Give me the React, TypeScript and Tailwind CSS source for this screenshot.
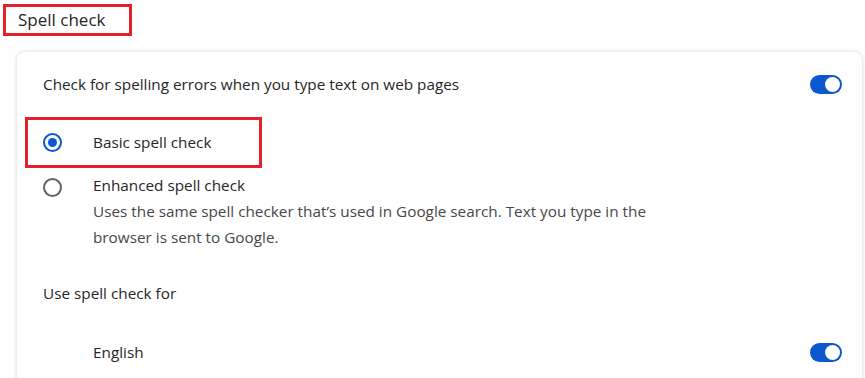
import React from "react";

function Toggle() {
  return (
    <div className="relative h-[19px] w-[32px] rounded-full bg-[#0b57d0]">
      <div className="absolute right-[2px] top-[2px] h-[15px] w-[15px] rounded-full bg-white" />
    </div>
  );
}

function Radio({ checked }: { checked: boolean }) {
  return checked ? (
    <div className="flex h-[19px] w-[19px] items-center justify-center rounded-full border-[2px] border-[#0b57d0]">
      <div className="h-[9px] w-[9px] rounded-full bg-[#0b57d0]" />
    </div>
  ) : (
    <div className="h-[19px] w-[19px] rounded-full border-[2px] border-[#5f6368]" />
  );
}

export default function App() {
  return (
    <div
      className="h-[378px] w-[865px] overflow-hidden bg-white text-[15.3px] text-[#262626]"
      style={{ fontFamily: '"Open Sans", "Noto Sans", sans-serif' }}
    >
      <div className="pl-[3px] pt-[4px]">
        <div className="flex h-[32px] w-[129px] items-center border-[3px] border-[#e3202b] pl-[12px] text-[17px]">
          Spell check
        </div>
      </div>
      <div className="ml-[17px] mr-[3px] mt-[16px] h-[400px] rounded-[8px] bg-white shadow-[0_0_4px_rgba(0,0,0,0.18)]">
        <div className="flex h-[62px] items-center justify-between pl-[26px] pr-[20px] pt-[2px]">
          <span>Check for spelling errors when you type text on web pages</span>
          <Toggle />
        </div>
        <div className="pl-[8px] pt-[3px]">
          <div className="flex h-[51px] w-[237px] items-center border-[3px] border-[#e3202b] pl-[15px]">
            <Radio checked />
            <span className="ml-[31px]">Basic spell check</span>
          </div>
        </div>
        <div className="flex pl-[26px] pt-[9px]">
          <div className="pt-[1px]">
            <Radio checked={false} />
          </div>
          <div className="ml-[31px] leading-[26px]">
            <div className="-mt-[5px]">Enhanced spell check</div>
            <div className="text-[#474747]">
              Uses the same spell checker that’s used in Google search. Text you type in the
              <br />
              browser is sent to Google.
            </div>
          </div>
        </div>
        <div className="flex h-[62px] items-center pl-[26px] pt-[24px]">
          Use spell check for
        </div>
        <div className="flex h-[70px] items-center justify-between pl-[76px] pr-[20px] pt-[10px]">
          <span>English</span>
          <Toggle />
        </div>
      </div>
    </div>
  );
}
